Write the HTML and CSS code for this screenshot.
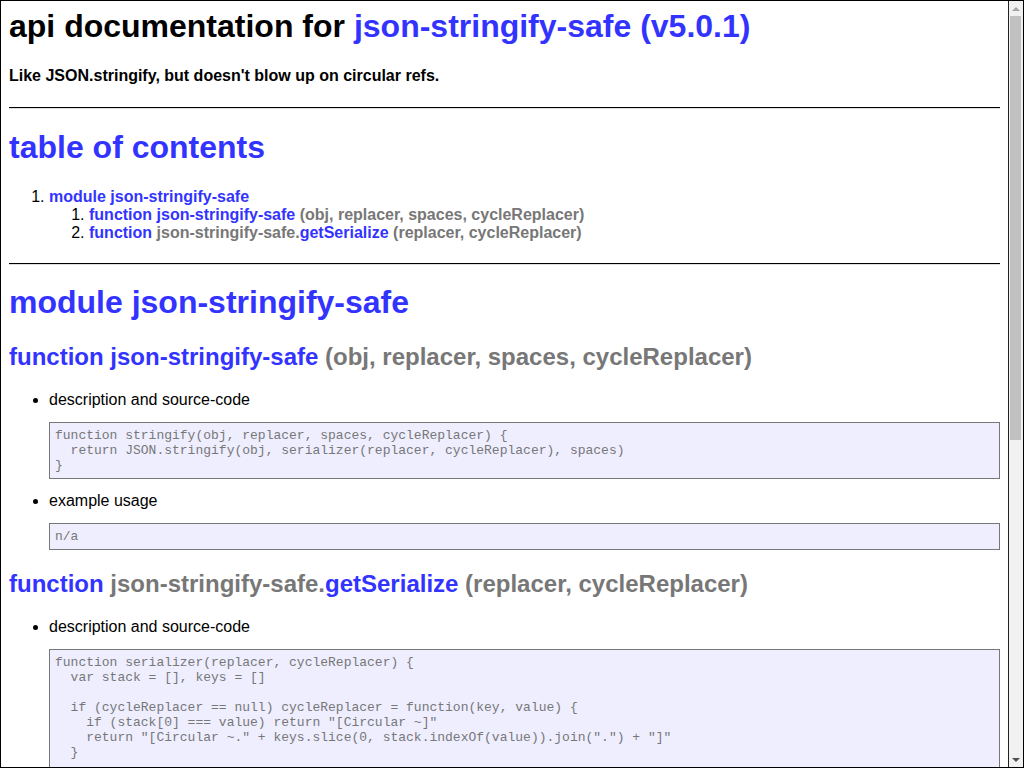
FILE: index.html
```html
<!DOCTYPE html>
<html lang="en">
<head>
<meta charset="utf-8">
<title>api documentation for json-stringify-safe (v5.0.1)</title>
<link rel="stylesheet" href="styles.css">
</head>
<body>
<div class="frame">
  <div class="viewport">
    <div class="page">
      <h1 class="title">api documentation for <a class="link" href="#">json-stringify-safe (v5.0.1)</a></h1>
      <h3 class="subtitle">Like JSON.stringify, but doesn't blow up on circular refs.</h3>
      <hr class="rule rule-first">
      <h1 class="heading heading-toc"><a class="link" href="#">table of contents</a></h1>
      <ol class="toc">
        <li><a class="link" href="#">module json-stringify-safe</a>
          <ol class="toc-sub">
            <li><a class="link" href="#">function json-stringify-safe</a> <span class="sig">(obj, replacer, spaces, cycleReplacer)</span></li>
            <li><a class="link" href="#">function</a> <span class="sig">json-stringify-safe.</span><a class="link" href="#">getSerialize</a> <span class="sig">(replacer, cycleReplacer)</span></li>
          </ol>
        </li>
      </ol>
      <hr class="rule rule-second">
      <h1 class="heading heading-module"><a class="link" href="#">module json-stringify-safe</a></h1>
      <h2 class="fn fn-first"><a class="link" href="#">function json-stringify-safe</a> <span class="sig">(obj, replacer, spaces, cycleReplacer)</span></h2>
      <ul class="items">
        <li>description and source-code<pre class="code">function stringify(obj, replacer, spaces, cycleReplacer) {
  return JSON.stringify(obj, serializer(replacer, cycleReplacer), spaces)
}</pre></li>
        <li class="item-next">example usage<pre class="code">n/a</pre></li>
      </ul>
      <h2 class="fn fn-next"><a class="link" href="#">function</a> <span class="sig">json-stringify-safe.</span><a class="link" href="#">getSerialize</a> <span class="sig">(replacer, cycleReplacer)</span></h2>
      <ul class="items">
        <li>description and source-code<pre class="code">function serializer(replacer, cycleReplacer) {
  var stack = [], keys = []

  if (cycleReplacer == null) cycleReplacer = function(key, value) {
    if (stack[0] === value) return "[Circular ~]"
    return "[Circular ~." + keys.slice(0, stack.indexOf(value)).join(".") + "]"
  }

  return function(key, value) {
    if (stack.length &gt; 0) {
      var thisPos = stack.indexOf(this)
      ~thisPos ? stack.splice(thisPos + 1) : stack.push(this)
      ~thisPos ? keys.splice(thisPos, Infinity, key) : keys.push(key)
      if (~stack.indexOf(value)) value = cycleReplacer.call(this, key, value)
    }
    else stack.push(value)

    return replacer == null ? value : replacer.call(this, key, value)
  }
}</pre></li>
        <li class="item-next">example usage<pre class="code">n/a</pre></li>
      </ul>
      <div class="footer">[ this document was created with <a class="link" href="#">utility2</a> ]</div>
    </div>
  </div>
  <div class="scrollbar" aria-hidden="true">
    <div class="sb-button sb-up"></div>
    <div class="sb-track"><div class="sb-thumb"></div></div>
    <div class="sb-button sb-down"></div>
  </div>
</div>
</body>
</html>
```

FILE: styles.css
```css
html, body {
  margin: 0;
  padding: 0;
  height: 100%;
  overflow: hidden;
  background: #fff;
}

.frame {
  box-sizing: border-box;
  height: 768px;
  border: 1px solid #000;
  display: flex;
}

.viewport {
  flex: 1;
  min-width: 0;
  overflow: hidden;
}

.scrollbar {
  box-sizing: border-box;
  width: 15px;
  flex: none;
  display: flex;
  flex-direction: column;
  background: #f1f1f1;
  border-left: 1px solid #222;
}

.sb-button {
  height: 15px;
  flex: none;
  display: flex;
  align-items: center;
  justify-content: center;
}

.sb-button::before {
  content: "";
  width: 0;
  height: 0;
  border-left: 4px solid transparent;
  border-right: 4px solid transparent;
}

.sb-up::before {
  border-bottom: 4px solid #a3a3a3;
}

.sb-down::before {
  border-top: 4px solid #505050;
}

.sb-track {
  flex: 1;
  padding: 0 2px 0 1px;
}

.sb-thumb {
  height: 424px;
  background: #c1c1c1;
}

.page {
  padding: 7px 8px 40px 8px;
  font-family: "Liberation Sans", Arial, sans-serif;
  font-size: 16px;
  line-height: 18px;
  color: #000;
}

.link {
  color: #33f;
  text-decoration: none;
}

.sig {
  color: #777;
}

.title {
  margin: 0;
  font-size: 32px;
  line-height: 37px;
  font-weight: bold;
}

.subtitle {
  margin: 22px 0 0;
  font-size: 16px;
  line-height: 18px;
  font-weight: bold;
}

.rule {
  height: 0;
  margin: 0;
  border: 0;
  border-top: 1px solid #000;
  border-bottom: 1px solid #ddd;
}

.rule-first {
  margin-top: 22px;
}

.rule-second {
  margin-top: 21px;
}

.heading {
  margin: 0;
  font-size: 32px;
  line-height: 37px;
  font-weight: bold;
}

.heading-toc {
  margin-top: 20px;
}

.heading-module {
  margin-top: 19px;
}

.toc {
  margin: 22px 0 0;
  padding-left: 40px;
  font-weight: bold;
}

.toc li::marker {
  font-weight: normal;
}

.toc-sub {
  margin: 0;
  padding-left: 40px;
}

.fn {
  margin: 0;
  font-size: 24px;
  line-height: 28px;
  font-weight: bold;
}

.fn-first {
  margin-top: 22px;
}

.fn-next {
  margin-top: 20px;
}

.items {
  margin: 20px 0 0;
  padding-left: 40px;
}

.item-next {
  margin-top: 13px;
}

.code {
  margin: 13px 0 0;
  padding: 5px;
  background: #eef;
  border: 1px solid #777;
  color: #777;
  font-family: "Liberation Mono", "Courier New", monospace;
  font-size: 13px;
  line-height: 15px;
  overflow: hidden;
}

.footer {
  margin-top: 20px;
  text-align: center;
}
```
